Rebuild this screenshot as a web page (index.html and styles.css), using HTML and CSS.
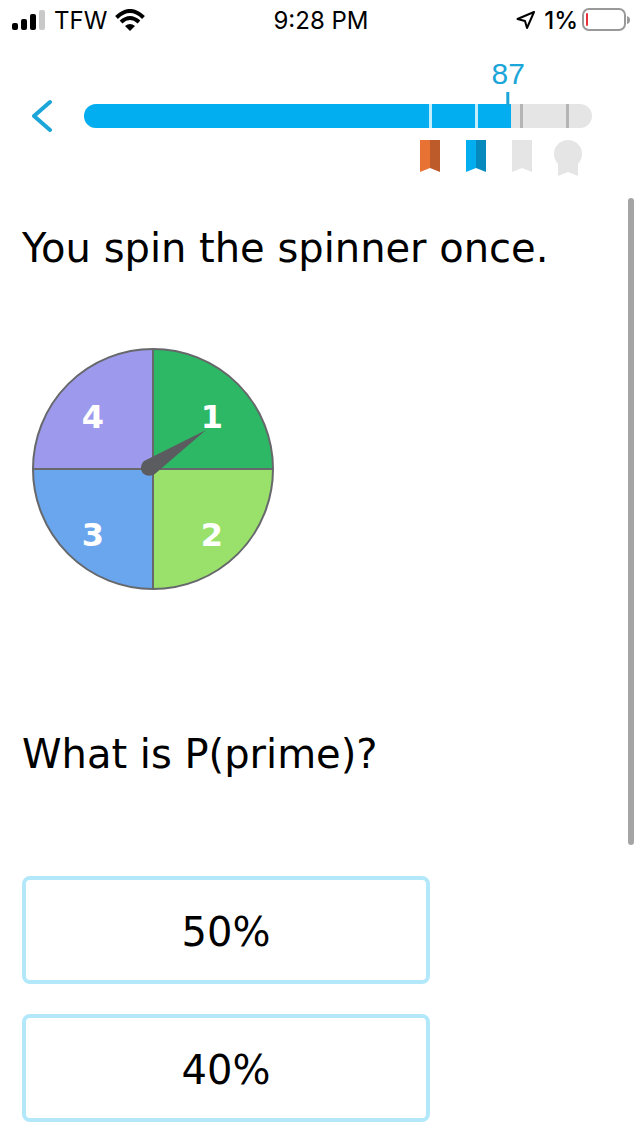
FILE: index.html
```html
<!DOCTYPE html>
<html lang="en">
<head>
  <meta charset="UTF-8" />
  <meta name="viewport" content="width=device-width, initial-scale=1.0" />
  <title>Spinner probability</title>
  <link rel="stylesheet" href="styles.css">
</head>
<body>
  <div class="status-bar">
    <div class="status-left">
      <svg class="signal" width="34" height="22" viewBox="0 0 34 22">
        <rect x="0" y="14" width="6" height="7" rx="2"/>
        <rect x="9" y="10" width="6" height="11" rx="2"/>
        <rect x="18" y="5" width="6" height="16" rx="2"/>
        <rect x="27" y="1" width="6" height="20" rx="2" fill="#c9c9c9"/>
      </svg>
      <span>TFW</span>
      <svg class="wifi" width="30" height="22" viewBox="0 0 30 22">
        <path d="M1.500 8.500Q15-4.500 28.500 8.500" fill="none" stroke="#000" stroke-width="4"/>
        <path d="M6 13Q15 5 24 13" fill="none" stroke="#000" stroke-width="4"/>
        <path d="M10 17Q15 13 20 17L15 22Z"/>
      </svg>
    </div>
    <span class="time">9:28 PM</span>
    <div class="status-right">
      <svg class="location" width="20" height="20" viewBox="0 0 20 20">
        <path d="M18 2L1.500 9L9 11L11 18Z" fill="none" stroke="#000" stroke-width="2" stroke-linejoin="round"/>
      </svg>
      <span>1%</span>
      <svg class="battery" width="48" height="24" viewBox="0 0 48 24">
        <rect x="1" y="1" width="42" height="21" rx="6" fill="none" stroke="#999" stroke-width="2"/>
        <rect x="4" y="5" width="2" height="13" rx="1" fill="#e8303a"/>
        <path d="M45 8Q48 9 48 12T45 16Z" fill="#999"/>
      </svg>
    </div>
  </div>

  <header class="header">
    <button class="back" type="button" aria-label="Back">
      <svg width="22" height="34" viewBox="0 0 22 34">
        <path d="M18 3L2 17L18 31" fill="none" stroke="#1ba5d8" stroke-width="4" stroke-linecap="round" stroke-linejoin="round"/>
      </svg>
    </button>
    <div class="progress">
      <div class="track">
        <div class="fill"></div>
      </div>
      <div class="score">87</div>
      <div class="goal goal-bronze">
        <svg width="20" height="32" viewBox="0 0 20 32">
          <path d="M0 0H10V28L0 32Z" fill="#e87234"/>
          <path d="M10 0H20V32L10 28Z" fill="#bd5b2b"/>
        </svg>
      </div>
      <div class="goal goal-blue">
        <svg width="20" height="32" viewBox="0 0 20 32">
          <path d="M0 0H10V28L0 32Z" fill="#02aeef"/>
          <path d="M10 0H20V32L10 28Z" fill="#068abd"/>
        </svg>
      </div>
      <div class="goal goal-third locked">
        <svg width="20" height="32" viewBox="0 0 20 32">
          <path d="M0 0H20V32L10 28L0 32Z" fill="#e5e5e5"/>
        </svg>
      </div>
      <div class="goal goal-medal locked">
        <svg width="28" height="36" viewBox="0 0 28 36">
          <circle cx="14" cy="14" r="14" fill="#e5e5e5"/>
          <path d="M4 22H24V36L14 32L4 36Z" fill="#e5e5e5"/>
        </svg>
      </div>
    </div>
  </header>

  <main class="question">
    <p>You spin the spinner once.</p>
    <svg class="spinner" width="244" height="244" viewBox="0 0 244 244" role="img" aria-label="Spinner with sections 1 to 4">
      <path d="M122 122V2A120 120 0 0 1 242 122Z" fill="#2db865"/>
      <path d="M122 122H242A120 120 0 0 1 122 242Z" fill="#99e16b"/>
      <path d="M122 122V242A120 120 0 0 1 2 122Z" fill="#6aa6ee"/>
      <path d="M122 122H2A120 120 0 0 1 122 2Z" fill="#9d9aee"/>
      <circle class="line" cx="122" cy="122" r="120"/>
      <path class="line" d="M122 2V242M2 122H242"/>
      <path d="M113 114L175 83L125 126C120 131 110 129 110 121C110 118 111 116 113 114Z" fill="#5b5c60"/>
      <text x="181" y="81">1</text>
      <text x="181" y="199">2</text>
      <text x="62" y="199">3</text>
      <text x="62" y="81">4</text>
    </svg>
    <p>What is P(prime)?</p>
    <div class="answers">
      <button type="button">50%</button>
      <button type="button">40%</button>
    </div>
    <div class="scroll-thumb"></div>
  </main>
</body>
</html>
```

FILE: styles.css
```css
* {
  box-sizing: border-box;
}

body {
  margin: 0;
  background-color: #fff;
  color: #000;
  font-family: "DejaVu Sans", Verdana, sans-serif;
}

.status-bar {
  display: grid;
  grid-template-columns: 1fr auto 1fr;
  align-items: center;
  height: 40px;
  padding: 0 10px 0 12px;
  font-family: Inter, "Liberation Sans", sans-serif;
  font-size: 24px;
}

.status-left,
.status-right {
  display: flex;
  align-items: center;
  gap: 8px;
}

.status-right {
  justify-content: flex-end;
}

.status-right span {
  font-weight: 500;
}

.battery {
  margin-left: -4px;
}

.header {
  display: flex;
  align-items: flex-start;
  gap: 30px;
  padding: 59px 48px 0 32px;
}

.back {
  display: flex;
  padding: 0;
  border: 0;
  background: none;
  cursor: pointer;
}

.progress {
  position: relative;
  flex: 1;
  padding: 5px 0 56px;
}

.track {
  height: 24px;
  border-radius: 12px;
  background-color: #e5e5e5;
  overflow: hidden;
}

.fill {
  width: 84%;
  height: 100%;
  background-color: #02aeef;
}

/* score label with the marker line under it */
.score {
  position: absolute;
  top: -40px;
  left: 83.5%;
  transform: translateX(-50%);
  color: #1ba5d8;
  font-family: "Liberation Sans", Arial, sans-serif;
  font-size: 30px;
  line-height: 30px;
}

.score::after {
  content: "";
  display: block;
  width: 3px;
  height: 14px;
  margin: 3px auto 0;
  background-color: #1ba5d8;
}

.goal {
  position: absolute;
  top: 5px;
  display: flex;
  flex-direction: column;
  align-items: center;
  gap: 12px;
  transform: translateX(-50%);
}

.goal::before {
  content: "";
  width: 3px;
  height: 24px;
  background-color: #c4edfc;
}

.locked::before {
  background-color: #b5b5b5;
}

.goal-bronze {
  left: 68.2%;
}

.goal-blue {
  left: 77.2%;
}

.goal-third {
  left: 86.2%;
}

.goal-medal {
  left: 95.2%;
}

.question {
  position: relative;
  padding: 40px 22px 14px;
  font-size: 40px;
  line-height: 48px;
}

.question p {
  margin: 0;
}

.spinner {
  display: block;
  margin: 75px 0 139px 9px;
}

.spinner .line {
  fill: none;
  stroke: #66686b;
  stroke-width: 2;
}

.spinner text {
  fill: #fff;
  font-size: 32px;
  font-weight: bold;
  text-anchor: middle;
}

.answers {
  display: flex;
  flex-direction: column;
  gap: 30px;
  max-width: 408px;
  margin-top: 98px;
}

.answers button {
  padding: 28px 26px 24px;
  border: 4px solid #b3e8fb;
  border-radius: 8px;
  background-color: #fff;
  color: #000;
  font: inherit;
  cursor: pointer;
}

.scroll-thumb {
  position: absolute;
  top: 14px;
  right: 6px;
  width: 6px;
  height: 68%;
  border-radius: 3px;
  background-color: #a5a5a5;
}
```
